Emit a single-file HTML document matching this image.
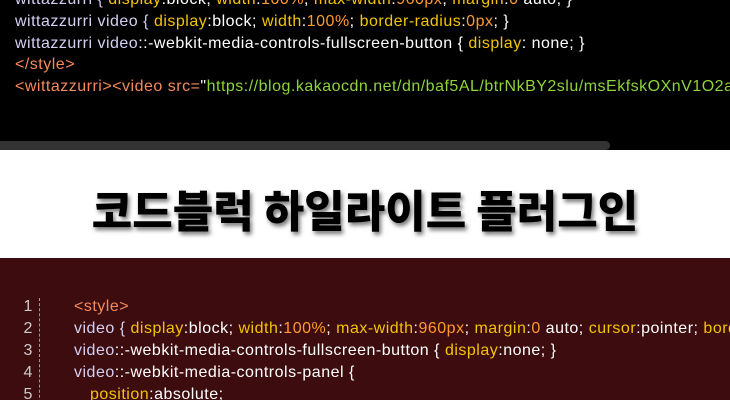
<!DOCTYPE html>
<html><head><meta charset="utf-8"><style>
body{margin:0;width:730px;height:400px;overflow:hidden;font-family:"Liberation Sans","Noto Sans CJK KR",sans-serif;}
.top{position:absolute;left:0;top:0;width:730px;height:150px;background:#000;overflow:hidden}
.top .l{position:absolute;left:15px;font-size:16px;white-space:nowrap;letter-spacing:0.5px}
.sb{position:absolute;left:0;top:141px;width:610px;height:9px;background:#333;border-radius:0 5px 5px 0}
.mid{position:absolute;left:0;top:150px;width:730px;height:108px;background:#fff}
.title{position:absolute;left:0;width:730px;top:178px;text-align:center;font-family:"Noto Sans CJK KR",sans-serif;font-weight:900;font-size:44px;letter-spacing:0px;color:#000;text-shadow:2px 3px 4px #777,0 0 2px #fff;line-height:60px}
.bot{position:absolute;left:0;top:258px;width:730px;height:142px;background:#3c0c0e;overflow:hidden}
.bot .n{position:absolute;left:18px;width:20px;text-align:center;color:#ccc;font-size:16px}
.bot .l{position:absolute;left:74px;font-size:16px;white-space:nowrap;letter-spacing:0.5px}
.dash{position:absolute;left:39px;top:40px;height:110px;border-left:1px dashed #999}
.s{color:#d4d0f4}.p{color:#f5c400}.v{color:#fff}.o{color:#ff9a30}.t{color:#f58a5a}.g{color:#8ed43a}
</style></head><body>
<div class="top">
<div class="l" style="top:-9px"><span class="s">wittazzurri { </span><span class="p">display</span><span class="v">:block; </span><span class="p">width</span><span class="v">:</span><span class="o">100%</span><span class="v">; </span><span class="p">max-width</span><span class="v">:</span><span class="o">960px</span><span class="v">; </span><span class="p">margin</span><span class="v">:</span><span class="o">0</span><span class="v"> auto; }</span></div>
<div class="l" style="top:13px"><span class="s">wittazzurri video { </span><span class="p">display</span><span class="v">:block; </span><span class="p">width</span><span class="v">:</span><span class="o">100%</span><span class="v">; </span><span class="p">border-radius</span><span class="v">:</span><span class="o">0px</span><span class="v">; }</span></div>
<div class="l" style="top:35px"><span class="s">wittazzurri video</span><span class="v">::-webkit-media-controls-fullscreen-button { </span><span class="p">display</span><span class="v">: none; }</span></div>
<div class="l" style="top:56px"><span class="t">&lt;/style&gt;</span></div>
<div class="l" style="top:78px"><span class="t">&lt;wittazzurri&gt;&lt;video src=</span><span class="v">"</span><span class="g">https://blog.kakaocdn.net/dn/baf5AL/btrNkBY2slu/msEkfskOXnV1O2aAE</span></div>
<div class="sb"></div>
</div>
<div class="mid"></div>
<div class="title">코드블럭 하일라이트 플러그인</div>
<div class="bot">
<div class="dash"></div>
<div class="n" style="top:40px">1</div><div class="l" style="top:40px"><span class="t">&lt;style&gt;</span></div>
<div class="n" style="top:62px">2</div><div class="l" style="top:62px"><span class="s">video { </span><span class="p">display</span><span class="v">:block; </span><span class="p">width</span><span class="v">:</span><span class="o">100%</span><span class="v">; </span><span class="p">max-width</span><span class="v">:</span><span class="o">960px</span><span class="v">; </span><span class="p">margin</span><span class="v">:</span><span class="o">0</span><span class="v"> auto; </span><span class="p">cursor</span><span class="v">:pointer; </span><span class="p">border-radius</span></div>
<div class="n" style="top:84px">3</div><div class="l" style="top:84px"><span class="s">video</span><span class="v">::-webkit-media-controls-fullscreen-button { </span><span class="p">display</span><span class="v">:none; }</span></div>
<div class="n" style="top:106px">4</div><div class="l" style="top:106px"><span class="s">video</span><span class="v">::-webkit-media-controls-panel {</span></div>
<div class="n" style="top:128px">5</div><div class="l" style="top:128px;left:90px"><span class="p">position</span><span class="v">:absolute;</span></div>
</div>
</body></html>
